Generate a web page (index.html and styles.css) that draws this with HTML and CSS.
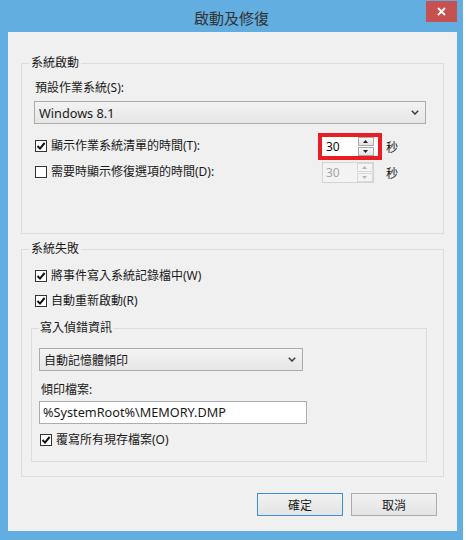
FILE: index.html
```html
<!DOCTYPE html>
<html lang="zh-Hant">
<head>
<meta charset="utf-8">
<title>啟動及修復</title>
<link rel="stylesheet" href="styles.css">
</head>
<body>
<div class="window">
  <div class="titlebar">
    <span class="title">啟動及修復</span>
    <span class="close"><svg width="9" height="9" viewBox="0 0 9 9"><path d="M1 1L8 8M8 1L1 8" stroke="#fff" stroke-width="1.8" fill="none"/></svg></span>
  </div>
  <div class="panel">
    <fieldset class="group g1">
      <legend>系統啟動</legend>
      <div class="label">預設作業系統(S):</div>
      <div class="select sel-os"><span class="latin">Windows 8.1</span><svg class="chev" width="8" height="5" viewBox="0 0 8 5"><path d="M0.8 0.8L4 4L7.2 0.8" stroke="#3a3a3a" stroke-width="1.5" fill="none"/></svg></div>
      <div class="row spin-row r1">
        <span class="cb"><svg width="10" height="10" viewBox="0 0 10 10"><path d="M1.5 5L4 7.6L8.6 2" stroke="#111" stroke-width="2" fill="none"/></svg></span>
        <span class="cb-text">顯示作業系統清單的時間(T):</span>
        <span class="spin-hl">
          <span class="spin bare">
            <span class="val">30</span>
            <span class="btns">
              <span class="sb"><svg width="5" height="3" viewBox="0 0 5 3"><path d="M0 3L2.5 0L5 3Z" fill="#222"/></svg></span>
              <span class="sb"><svg width="5" height="3" viewBox="0 0 5 3"><path d="M0 0L2.5 3L5 0Z" fill="#222"/></svg></span>
            </span>
          </span>
        </span>
        <span class="unit">秒</span>
      </div>
      <div class="row spin-row r2">
        <span class="cb"></span>
        <span class="cb-text">需要時顯示修復選項的時間(D):</span>
        <span class="spin disabled">
          <span class="val">30</span>
          <span class="btns">
            <span class="sb"><svg width="5" height="3" viewBox="0 0 5 3"><path d="M0 3L2.5 0L5 3Z" fill="#b4b4b4"/></svg></span>
            <span class="sb"><svg width="5" height="3" viewBox="0 0 5 3"><path d="M0 0L2.5 3L5 0Z" fill="#b4b4b4"/></svg></span>
          </span>
        </span>
        <span class="unit">秒</span>
      </div>
    </fieldset>

    <fieldset class="group g2">
      <legend>系統失敗</legend>
      <div class="row c1">
        <span class="cb"><svg width="10" height="10" viewBox="0 0 10 10"><path d="M1.5 5L4 7.6L8.6 2" stroke="#111" stroke-width="2" fill="none"/></svg></span>
        <span class="cb-text">將事件寫入系統記錄檔中(W)</span>
      </div>
      <div class="row c2">
        <span class="cb"><svg width="10" height="10" viewBox="0 0 10 10"><path d="M1.5 5L4 7.6L8.6 2" stroke="#111" stroke-width="2" fill="none"/></svg></span>
        <span class="cb-text">自動重新啟動(R)</span>
      </div>
      <fieldset class="group g3">
        <legend>寫入偵錯資訊</legend>
        <div class="select sel-dump"><span>自動記憶體傾印</span><svg class="chev" width="8" height="5" viewBox="0 0 8 5"><path d="M0.8 0.8L4 4L7.2 0.8" stroke="#3a3a3a" stroke-width="1.5" fill="none"/></svg></div>
        <div class="label">傾印檔案:</div>
        <div class="textbox"><span class="latin">%SystemRoot%\MEMORY.DMP</span></div>
        <div class="row c3">
          <span class="cb"><svg width="10" height="10" viewBox="0 0 10 10"><path d="M1.5 5L4 7.6L8.6 2" stroke="#111" stroke-width="2" fill="none"/></svg></span>
          <span class="cb-text">覆寫所有現存檔案(O)</span>
        </div>
      </fieldset>
    </fieldset>

    <div class="buttons">
      <span class="btn default">確定</span>
      <span class="btn">取消</span>
    </div>
  </div>
</div>
</body>
</html>
```

FILE: styles.css
```css
body {
  margin: 0;
  background: #ffffff;
  font-family: "Noto Sans", "Noto Sans CJK TC", sans-serif;
  font-size: 12px;
  color: #1a1a1a;
}

.window {
  width: 463px;
  height: 540px;
  background: #62aee0;
  display: flex;
  flex-direction: column;
}

.titlebar {
  flex: none;
  height: 32px;
  display: grid;
  grid-template-columns: 1fr auto 1fr;
  align-items: start;
}

.title {
  grid-column: 2;
  font-family: "Noto Sans CJK TC", sans-serif;
  font-size: 15px;
  line-height: 20px;
  margin-top: 8px;
  color: #333;
}

.close {
  grid-column: 3;
  justify-self: end;
  width: 31px;
  height: 21px;
  margin: 1px 6px 0 0;
  background: #c75050;
  display: flex;
  align-items: center;
  justify-content: center;
}

.panel {
  flex: none;
  height: 499px;
  margin: 0 6px 0 8px;
  background: #f0f0f0;
  box-sizing: border-box;
  padding: 23px 13px 0 13px;
  display: flex;
  flex-direction: column;
}

.group {
  margin: 0;
  min-width: 0;
  border: 1px solid #dcdcdc;
}

legend {
  line-height: 16px;
  height: 16px;
  padding: 0 2px;
}

.g1 {
  padding: 0 0 48px 12px;
}
.g1 > legend {
  margin-left: -5px;
}

.label {
  line-height: 16px;
  padding-left: 1px;
}
.g1 .label {
  margin-top: 9px;
}

.latin {
  font-size: 12.7px;
}

.select {
  height: 23px;
  box-sizing: border-box;
  border: 1px solid #acacac;
  background: linear-gradient(#f3f3f3, #e6e6e6);
  display: flex;
  align-items: center;
  justify-content: space-between;
  padding: 0 6px 0 4px;
}
.sel-os {
  margin-top: 5px;
  margin-right: 17px;
}

.row {
  display: flex;
  align-items: center;
}

.cb {
  flex: none;
  width: 12px;
  height: 12px;
  box-sizing: border-box;
  border: 1px solid #333;
  background: #fff;
  display: flex;
  align-items: center;
  justify-content: center;
}

.cb-text {
  margin-left: 4px;
  line-height: 16px;
}

.spin-row {
  height: 26px;
  padding-left: 1px;
}
.r1 {
  margin-top: 9px;
}

.spin-hl {
  margin: -4px -8px -4px auto;
  border: 4px solid #ea1c24;
  padding-right: 4px;
  background: #fff;
  display: flex;
}

.spin {
  width: 52px;
  box-sizing: border-box;
  display: flex;
}
.spin.bare {
  height: 19px;
  background: #fff;
}
.spin.disabled {
  height: 21px;
  margin-left: auto;
  border: 1px solid #d4d4d4;
  background: #f3f3f3;
  color: #a8a8a8;
}
.val {
  flex: 1;
  padding-left: 3px;
  line-height: 19px;
  font-size: 12px;
}
.bare .val {
  padding-left: 4px;
  color: #111;
}

.btns {
  width: 16px;
  display: flex;
  flex-direction: column;
  justify-content: space-between;
}
.sb {
  height: 9px;
  box-sizing: border-box;
  border: 1px solid #a9a9a9;
  background: linear-gradient(#f6f6f6, #e3e3e3);
  display: flex;
  align-items: center;
  justify-content: center;
}
.disabled .sb {
  border-color: #d9d9d9;
  background: #f4f4f4;
}

.unit {
  margin-left: 12px;
  margin-right: 45px;
  font-family: "Noto Sans CJK TC", sans-serif;
}

.g2 {
  margin-top: 7px;
  padding: 0 0 14px 9px;
}
.g2 > legend {
  margin-left: -2px;
}
.c1, .c2 {
  height: 20px;
  padding-left: 4px;
}
.c1 {
  margin-top: 9px;
}
.c2 {
  margin-top: 5px;
}

.g3 {
  margin: 9px 16px 0 0;
  padding: 0 0 11px 7px;
}
.g3 > legend {
  padding: 0 1px;
}
.sel-dump {
  width: 264px;
  margin-top: 12px;
}
.g3 .label {
  margin-top: 11px;
  padding-left: 2px;
}
.textbox {
  width: 268px;
  height: 23px;
  box-sizing: border-box;
  margin-top: 3px;
  border: 1px solid #abadb3;
  background: #fff;
  padding-left: 3px;
  line-height: 21px;
}
.c3 {
  height: 20px;
  margin-top: 6px;
  padding-left: 1px;
}

.buttons {
  display: flex;
  justify-content: flex-end;
  gap: 8px;
  margin-top: 16px;
  padding-right: 7px;
}
.btn {
  width: 86px;
  height: 23px;
  box-sizing: border-box;
  border: 1px solid #acacac;
  background: linear-gradient(#f1f1f1, #e4e4e4);
  display: flex;
  align-items: center;
  justify-content: center;
  font-family: "Noto Sans CJK TC", sans-serif;
}
.btn.default {
  border-color: #3d8fe0;
}
```
